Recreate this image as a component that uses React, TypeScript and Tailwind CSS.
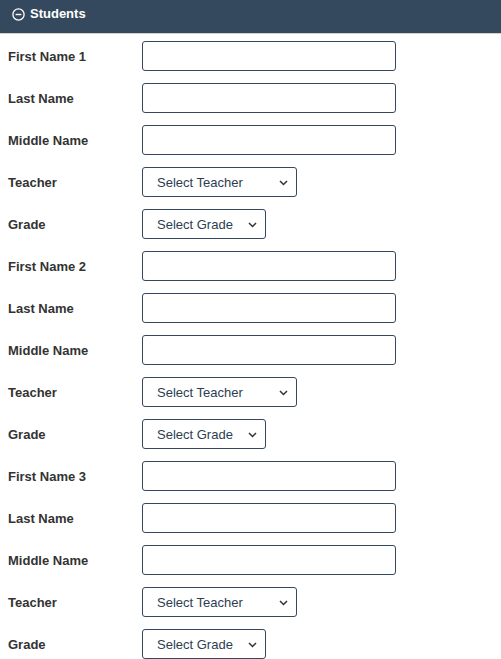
import React from "react";

const font = { fontFamily: '"Liberation Sans", Arial, sans-serif' };

function Chevron() {
  return (
    <svg width="9" height="6" viewBox="0 0 9 6" className="absolute right-[9px] top-[13px] pointer-events-none">
      <path d="M1 1 L4.5 4.5 L8 1" fill="none" stroke="#333" strokeWidth="1.5" />
    </svg>
  );
}

function Select({ label, width }: { label: string; width: string }) {
  return (
    <div className={`relative ${width} h-[30px]`}>
      <select
        className="appearance-none w-full h-full border border-[#34495e] rounded-[3px] bg-white pl-[14px] pt-[2px] text-[13px] text-[#2c3e50] outline-none"
        style={font}
        defaultValue=""
      >
        <option value="">{label}</option>
      </select>
      <Chevron />
    </div>
  );
}

function Row({ label, children }: { label: string; children: React.ReactNode }) {
  return (
    <div className="flex items-center h-[30px]">
      <div className="w-[134px] text-[13px] font-bold text-[#333] pt-[2px]">{label}</div>
      {children}
    </div>
  );
}

function TextInput() {
  return <input className="w-[254px] h-[30px] border border-[#34495e] rounded-[3px] bg-white outline-none" />;
}

export default function App() {
  const students = [1, 2, 3];
  return (
    <div className="w-[501px] h-[659px] overflow-hidden bg-white" style={font}>
      <div className="h-[34px] bg-[#34495e] border-b border-[#d0d0d0] flex items-start pt-[6px] pl-[12px] gap-[5px]">
        <svg width="13" height="13" viewBox="0 0 13 13" className="mt-[2px]">
          <circle cx="6.5" cy="6.5" r="5.6" fill="none" stroke="white" strokeWidth="1.3" />
          <line x1="3.6" y1="6.5" x2="9.4" y2="6.5" stroke="white" strokeWidth="1.4" />
        </svg>
        <span className="text-white font-bold text-[13px] leading-[16px]">Students</span>
      </div>
      <div className="flex flex-col gap-[12px] pl-[8px] pt-[7px]">
        {students.map((n) => (
          <React.Fragment key={n}>
            <Row label={`First Name ${n}`}>
              <TextInput />
            </Row>
            <Row label="Last Name">
              <TextInput />
            </Row>
            <Row label="Middle Name">
              <TextInput />
            </Row>
            <Row label="Teacher">
              <Select label="Select Teacher" width="w-[155px]" />
            </Row>
            <Row label="Grade">
              <Select label="Select Grade" width="w-[124px]" />
            </Row>
          </React.Fragment>
        ))}
      </div>
    </div>
  );
}
